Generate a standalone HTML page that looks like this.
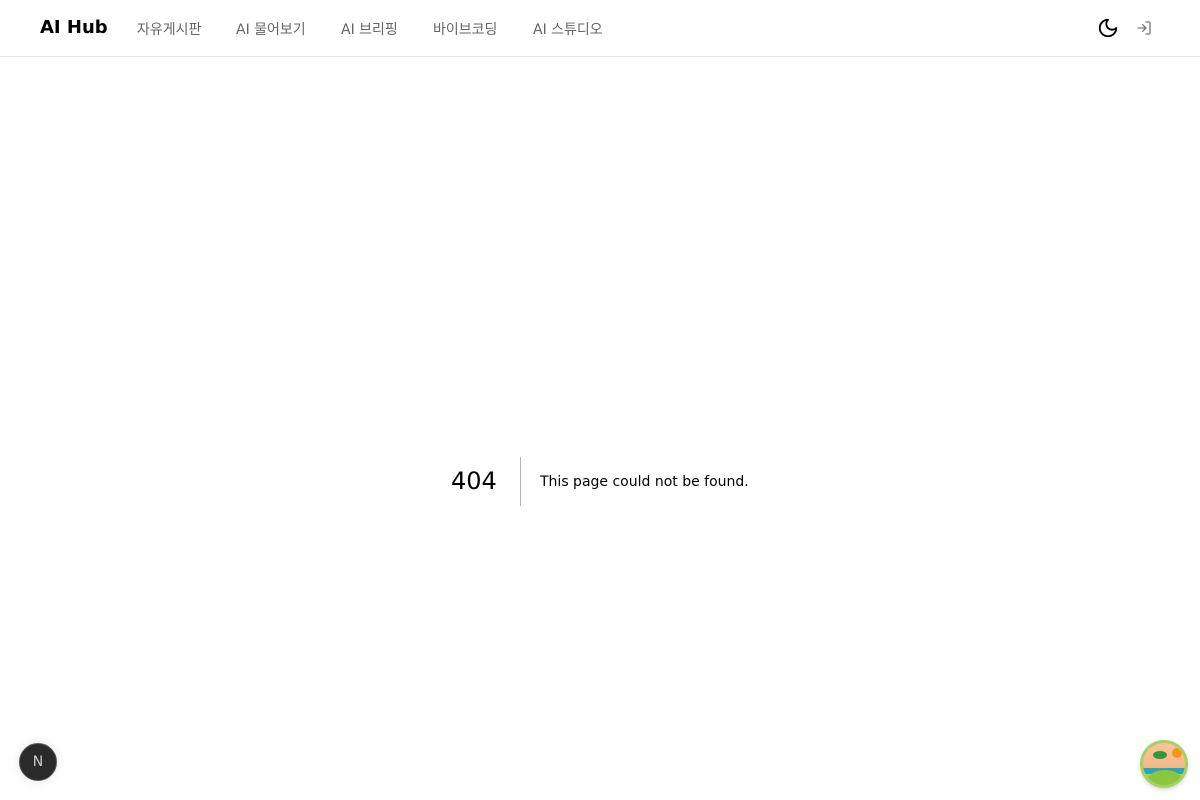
<!DOCTYPE html>
<html><head><meta charset="utf-8"><style>
*{margin:0;padding:0;box-sizing:border-box}
body{width:1200px;height:800px;background:#fff;font-family:"Liberation Sans","Noto Sans CJK KR",sans-serif;position:relative;overflow:hidden}
header{height:57px;border-bottom:1px solid #e5e5e5;position:relative}
.logo{position:absolute;left:40px;top:17px;font-size:18px;font-weight:bold;color:#000;font-family:"DejaVu Sans",sans-serif}
.nav a{position:absolute;top:19px;font-size:14px;color:#666;text-decoration:none;font-family:"DejaVu Sans","Noto Sans CJK KR",sans-serif}
.e{position:absolute;top:457px;left:0;width:1200px;height:49px}
.c{position:absolute;left:451px;top:10px;font-size:24px;color:#000;font-family:"DejaVu Sans",sans-serif}
.d{position:absolute;left:520px;top:0;width:1px;height:49px;background:#b3b3b3}
.m{position:absolute;left:540px;top:17px;font-size:14px;color:#000;font-family:"DejaVu Sans",sans-serif}
.n{position:absolute;left:19px;top:743px;width:38px;height:38px;border-radius:50%;background:#2a2a2a;border:1px solid #555;box-shadow:0 0 12px rgba(0,0,0,.1);color:#ccc;font-family:"DejaVu Sans",sans-serif;font-size:14px;text-align:center;line-height:36px}
.b{position:absolute;left:1140px;top:740px;width:48px;height:48px;border-radius:50%;background:linear-gradient(#f7c59a,#f7b98d 50%,#9ac84a);border:3px solid #a8d060;overflow:hidden;box-shadow:0 2px 4px rgba(0,0,0,.15)}
</style></head><body>
<header>
<div class="logo">AI Hub</div>
<div class="nav">
<a style="left:137px">자유게시판</a>
<a style="left:236px">AI 물어보기</a>
<a style="left:341px">AI 브리핑</a>
<a style="left:433px">바이브코딩</a>
<a style="left:533px">AI 스튜디오</a>
</div>
<svg style="position:absolute;left:1097px;top:17px" width="22" height="22" viewBox="0 0 24 24" fill="none" stroke="#000" stroke-width="2" stroke-linecap="round" stroke-linejoin="round"><path d="M12 3a6 6 0 0 0 9 9 9 9 0 1 1-9-9Z"/></svg>
<svg style="position:absolute;left:1136px;top:20px" width="16" height="16" viewBox="0 0 24 24" fill="none" stroke="#777" stroke-width="2" stroke-linecap="round" stroke-linejoin="round"><path d="M15 3h4a2 2 0 0 1 2 2v14a2 2 0 0 1-2 2h-4"/><path d="M10 17l5-5-5-5"/><path d="M15 12H3"/></svg>
</header>
<div class="e"><div class="c">404</div><div class="d"></div><div class="m">This page could not be found.</div></div>
<div class="n">N</div>
<div class="b">
<div style="position:absolute;left:0;top:25px;width:48px;height:6px;background:#2aa6b8"></div>
<div style="position:absolute;left:4px;top:27px;width:36px;height:22px;border-radius:50% 50% 0 0;background:#8cc63f"></div>
<div style="position:absolute;left:29px;top:5px;width:10px;height:10px;border-radius:50%;background:#f7941d"></div>
<div style="position:absolute;left:10px;top:8px;width:14px;height:8px;border-radius:50%;background:#2e9a3a"></div>
</div>
</body></html>
